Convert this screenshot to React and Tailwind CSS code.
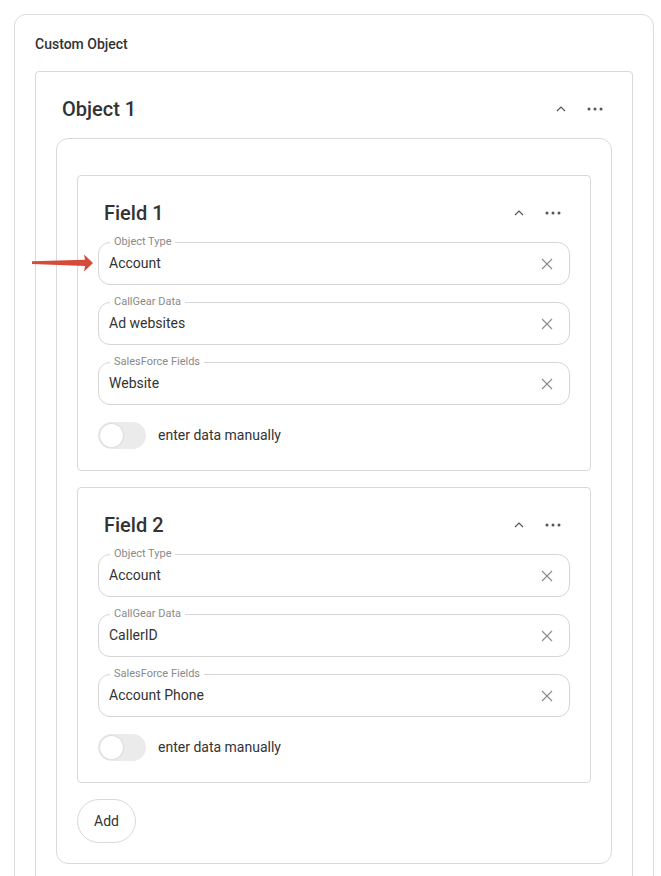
import React from "react";

function Chevron() {
  return (
    <svg width="12" height="8" viewBox="0 0 12 8" className="text-[#555]">
      <path d="M2 6 L6 2 L10 6" fill="none" stroke="currentColor" strokeWidth="1.2" />
    </svg>
  );
}

function Dots() {
  return (
    <svg width="16" height="4" viewBox="0 0 16 4" className="text-[#555]">
      <circle cx="2" cy="2" r="1.5" fill="currentColor" />
      <circle cx="8" cy="2" r="1.5" fill="currentColor" />
      <circle cx="14" cy="2" r="1.5" fill="currentColor" />
    </svg>
  );
}

function XIcon() {
  return (
    <svg width="12" height="12" viewBox="0 0 12 12" className="text-[#8a8a8a]">
      <path d="M1 1 L11 11 M11 1 L1 11" fill="none" stroke="currentColor" strokeWidth="1.1" />
    </svg>
  );
}

function Header({ title }) {
  return (
    <div className="flex items-center justify-between pl-[6px] pr-[9px]">
      <span className="text-[20px] leading-6 font-medium text-[#333]">{title}</span>
      <div className="flex items-center gap-[20px]">
        <Chevron />
        <Dots />
      </div>
    </div>
  );
}

function Input({ label, value }) {
  return (
    <div className="relative h-[43px] rounded-[12px] border border-[#d6d6d6] flex items-center pl-[10px] pr-[16px]">
      <span className="absolute left-[11px] -top-[8px] bg-white px-[4px] text-[11px] leading-[14px] text-[#8a8a8a]">
        {label}
      </span>
      <span className="flex-1 text-[14px] text-[#333]">{value}</span>
      <XIcon />
    </div>
  );
}

function Toggle() {
  return (
    <div className="flex items-center gap-[12px] h-[27px]">
      <div className="w-[48px] h-[27px] rounded-full bg-[#ebebeb] flex items-center px-[2px]">
        <div className="w-[23px] h-[23px] rounded-full bg-white shadow-[0_0_2px_rgba(0,0,0,0.2)]" />
      </div>
      <span className="text-[14px] text-[#333]">enter data manually</span>
    </div>
  );
}

function Field({ title, values }) {
  return (
    <div className="rounded-[4px] border border-[#d9d9d9] pt-[25px] pb-[21px] px-[20px] flex flex-col gap-[17px]">
      <Header title={title} />
      <Input label="Object Type" value={values[0]} />
      <Input label="CallGear Data" value={values[1]} />
      <Input label="SalesForce Fields" value={values[2]} />
      <Toggle />
    </div>
  );
}

export default function App() {
  return (
    <div className="relative pt-[14px] pl-[14px] pr-[7px] bg-white" style={{ fontFamily: "Roboto, 'Liberation Sans', sans-serif" }}>
      <div className="rounded-[12px] border border-[#dcdcdc] pt-[21px] px-[20px] pb-[20px]">
        <div className="text-[14px] leading-4 font-medium text-[#333] mb-[19px]">Custom Object</div>
        <div className="rounded-[4px] border border-[#d9d9d9] pt-[25px] px-[20px] pb-[20px] flex flex-col gap-[17px]">
          <Header title="Object 1" />
          <div className="rounded-[12px] border border-[#d9d9d9] pt-[36px] pb-[20px] px-[20px] flex flex-col gap-[16px] items-stretch">
            <Field title="Field 1" values={["Account", "Ad websites", "Website"]} />
            <Field title="Field 2" values={["Account", "CallerID", "Account Phone"]} />
            <div>
              <button className="w-[59px] h-[44px] rounded-full border border-[#d9d9d9] text-[14px] text-[#333] bg-white">
                Add
              </button>
            </div>
          </div>
        </div>
      </div>
      <svg className="absolute left-[32px] top-[254px]" width="62" height="18" viewBox="0 0 62 18">
        <polygon points="0,7.2 53,5.8 52,0.5 61,9 52,17.5 53,12 0,10" fill="#d64a3b" />
      </svg>
    </div>
  );
}
